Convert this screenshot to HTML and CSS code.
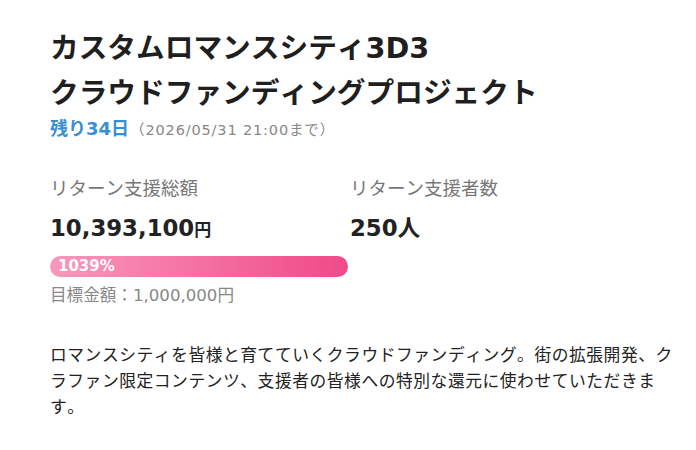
FILE: index.html
```
<!DOCTYPE html>
<html lang="ja">
<head>
<meta charset="utf-8">
<link rel="stylesheet" href="styles.css">
</head>
<body>
<main class="project">
  <h1 class="title">カスタムロマンスシティ3D3<br>クラウドファンディングプロジェクト</h1>
  <p class="deadline"><span class="remain">残り34日</span><span class="until">（2026/05/31 21:00まで）</span></p>
  <section class="stats">
    <div class="stat">
      <div class="label">リターン支援総額</div>
      <div class="value">10,393,100<span class="unit">円</span></div>
      <div class="bar"><span class="bar-text">1039%</span></div>
      <div class="goal">目標金額：1,000,000円</div>
    </div>
    <div class="stat">
      <div class="label">リターン支援者数</div>
      <div class="value">250人</div>
    </div>
  </section>
  <p class="desc">ロマンスシティを皆様と育てていくクラウドファンディング。街の拡張開発、クラファン限定コンテンツ、支援者の皆様への特別な還元に使わせていただきます。</p>
</main>
</body>
</html>
```
FILE: styles.css
```
* { box-sizing: border-box; }
html, body { margin: 0; background: #fff; }
body {
  font-family: "DejaVu Sans", "Noto Sans CJK JP", sans-serif;
  color: #222;
  font-kerning: none;
  text-spacing-trim: space-all;
}
.project {
  padding: 26px 18px 0 50px;
}
.title {
  margin: 0;
  font-size: 28.7px;
  line-height: 45px;
  font-weight: 700;
  color: #1f1f1f;
}
.deadline {
  margin: 1px 0 0;
  line-height: 24px;
  display: flex;
  align-items: baseline;
}
.remain {
  color: #3a8fcf;
  font-weight: 700;
  font-size: 18px;
}
.until {
  color: #888;
  font-size: 14.5px;
  letter-spacing: 0.85px;
  margin-left: 1px;
}
.stats {
  margin-top: 34px;
  display: grid;
  grid-template-columns: 300px 1fr;
}
.label {
  font-size: 18.5px;
  line-height: 26px;
  color: #777;
}
.value {
  margin-top: 10px;
  font-size: 22.8px;
  line-height: 32px;
  font-weight: 700;
  color: #222;
}
.unit { font-size: 17px; }
.bar {
  margin-top: 10px;
  width: 298px;
  height: 21px;
  border-radius: 11px;
  background: linear-gradient(to right, #f898bc, #f0498a);
  display: flex;
  align-items: center;
  padding-left: 8px;
}
.bar-text {
  color: #fff;
  font-weight: 700;
  font-size: 15px;
  line-height: 21px;
}
.goal {
  margin-top: 7px;
  font-size: 16.6px;
  line-height: 24px;
  color: #888;
}
.desc {
  margin: 34px 0 0;
  font-size: 16.75px;
  line-height: 26px;
  letter-spacing: 0.55px;
  color: #222;
}
```
